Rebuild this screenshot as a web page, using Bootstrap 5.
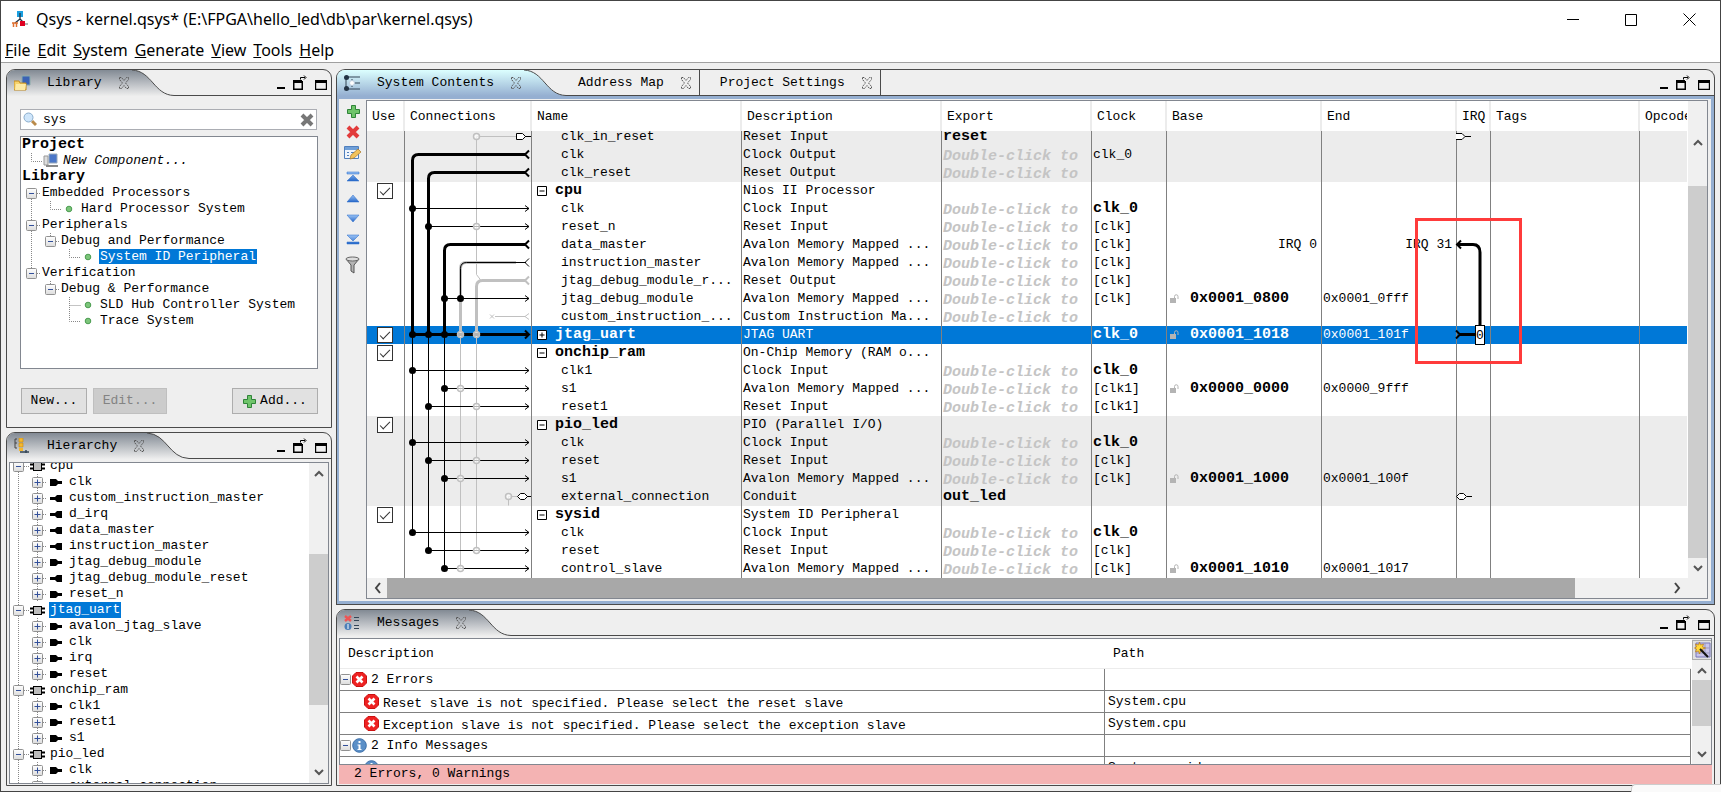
<!DOCTYPE html>
<html lang="en">
<head>
<meta charset="utf-8">
<meta name="viewport" content="width=device-width, initial-scale=1">
<title>Qsys - kernel.qsys*</title>
<link href="https://cdn.jsdelivr.net/npm/bootstrap@5.3.0/dist/css/bootstrap.min.css" rel="stylesheet">
<style>
  :root { --edge: #4a4a4a; --grid: #808080; --sel: #0078d7; }
  body { font: 13px/16px "Liberation Mono", monospace; color: #000; background: #efefef; }
  .win { height: 100vh; border: 1px solid #444; background: #efefef; overflow: hidden; }
  button { border: 0; background: none; padding: 0; color: inherit; }
  svg { display: block; flex: none; }
  .ui { font-family: "Noto Sans", sans-serif; font-size: 16px; line-height: 20px; }
  .titlebar { height: 36px; background: #fff; padding: 0 24px 0 11px; }
  .titlebar .mid { margin: 0 46px; }
  .menubar { height: 26px; background: #fff; border-bottom: 1px solid #a0a0a0; padding-left: 4px; gap: 7px; }
  .menubar a { color: #000; text-decoration: none; }
  .work { padding: 6px 5px 5px 5px; gap: 4px; }
  .side { width: 326px; gap: 4px; }
  .pane { border: 1px solid var(--edge); border-radius: 9px 9px 0 0; overflow: hidden; }
  .lib { height: 359px; }
  .pane-head { height: 26px; }
  .tab-on { background: linear-gradient(#828a94, #eeeeee); padding-left: 7px; }
  .tab-blue { background: linear-gradient(#dcffff, #95afd1); }
  .tab-name { padding-left: 16px; font-size: 13px; line-height: 26px; white-space: pre; }
  .tab-x { margin: 0 2px 0 16px; }
  .rest { border-bottom: 1px solid var(--edge); padding-right: 4px; }
  .plain-tab { border-right: 1px solid var(--edge); padding: 0 7px 0 20px; }
  .plain-tab.first { padding-left: 12px; }
  .lib-body { padding: 13px 13px 0 13px; }
  .search { height: 21px; border: 1px solid #abadb3; background: #fff; padding: 0 2px 0 2px; margin-right: 1px; }
  .search input { border: 0; outline: 0; background: none; padding: 0 0 0 6px; font: inherit; min-width: 0; }
  .tree { background: #fff; border: 1px solid #828790; overflow: hidden; white-space: pre; }
  .lib .tree { height: 233px; margin-top: 6px; }
  .trow { height: 16px; display: flex; align-items: center; }
  .trow b { font-size: 15px; }
  .picked { background: var(--sel); color: #fff; padding: 0 1px; }
  .modname { padding-left: 1px; }
  .pb { width: 66px; height: 26px; border: 1px solid #adadad; background: #e1e1e1; }
  .pb:disabled { border-color: #bfbfbf; background: #ccc; color: #838383; width: 74px; margin-left: 6px; }
  .pb-add { width: 86px; }
  .lib-btns { padding: 19px 0 0 1px; }
  .hier .tree { margin: 3px 2px 1px 2px; }
  .hier .rows { margin-top: -5px; height: 10px; }
  .vbar { width: 20px; background: #f0f0f0; border-left: 1px solid #fff; }
  .vbar button, .hbar button { display: flex; align-items: center; justify-content: center; flex: none; }
  .vbar button { height: 20px; }
  .hbar button { width: 20px; }
  .thumb { background: #cdcdcd; }
  .thumb-dark { background: #a8a8a8; }
  .main { border-bottom: 0; }
  .main-body { border: solid #95afd1; border-width: 3px 3px 3px 2px; padding: 1px 3px 2px 0; }
  .main-wrap { border-bottom: 1px solid var(--edge); }
  .tools { width: 27px; padding-top: 3px; }
  .tools button { display: block; margin-bottom: 5px; }
  .sheet { border: 1px solid #828790; background: #fff; }
  .sheet-clip { overflow: hidden; }
  table { border-collapse: separate; border-spacing: 0; table-layout: fixed; width: 100%; }
  th { font-weight: 400; overflow: hidden; white-space: nowrap; }
  .sys th { height: 30px; padding: 2px 0 0 5px; border-right: 2px solid #ececec; }
  .sys th:last-child { border-right: 0; }
  .sys td { padding: 0; height: 18px; line-height: 18px; white-space: pre; border-right: 1px solid var(--grid); }
  .sys td:first-child { padding-left: 10px; }
  .sys td:last-child { border-right: 0; }
  .cell { height: 18px; overflow: hidden; display: flex; align-items: center; padding-left: 1px; }
  .cut .cell { height: 15px; align-items: flex-end; }
  .cut td { height: 15px; }
  .sys b, .hint { font-size: 15px; font-weight: 700; }
  .hint { font-style: italic; color: #c4c4c4; padding-top: 3px; }
  .lk { margin: 0 11px 0 2px; }
  .alt { background: #ececec; }
  .on { background: var(--sel); color: #fff; }
  .holder { position: relative; }
  .wires { position: absolute; left: -1px; top: 0; z-index: 1; overflow: visible; }
  .callout-box { position: absolute; left: -42px; top: 87px; width: 107px; height: 146px; border: 3px solid #ff3b3b; z-index: 2; }
  .ck { appearance: none; width: 16px; height: 16px; margin: 0; border: 1px solid #333; background: #fff; display: grid; place-items: center; }
  .ck:checked::after { content: ""; width: 10px; height: 5px; border: solid #333; border-width: 0 0 1px 1px; transform: rotate(-45deg) translate(1px, -1px); }
  .hbar { height: 20px; background: #f0f0f0; padding-right: 20px; }
  .msg-body { padding: 2px 2px 1px 2px; }
  .msg-sheet { background: #fff; border: 1px solid #828790; min-height: 0; flex: 1 1 0; }
  .msg th { height: 30px; padding-left: 8px; border-bottom: 1px solid #ececec; }
  .msg td { height: 22px; padding: 0; border-bottom: 1px solid var(--grid); border-right: 1px solid var(--grid); white-space: pre; }
  .msg td > div { display: flex; align-items: center; }
  .msg td + td { padding-left: 3px; }
  .wand { width: 20px; height: 29px; border: 1px solid #adadad; background: #e1e1e1; margin-top: 1px; }
  .status { background: #f4b3b3; height: 19px; line-height: 18px; padding-left: 15px; white-space: pre; }
  .strip { position: absolute; right: 0; bottom: 0; width: 90px; height: 8px; background: #fafafa; border: 1px solid #ccc; border-width: 1px 0 0 1px; border-radius: 5px 0 0 0; z-index: 3; }
</style>
</head>
<body>
<svg width="0" height="0" class="position-absolute">
  <defs>
    <linearGradient id="gGray" x2="0" y2="1"><stop stop-color="#828a94"/><stop offset="1" stop-color="#eee"/></linearGradient>
    <linearGradient id="gBlue" x2="0" y2="1"><stop stop-color="#dcffff"/><stop offset="1" stop-color="#95afd1"/></linearGradient>
    <linearGradient id="gArrow" x2="0" y2="1"><stop stop-color="#9cc4f5"/><stop offset="1" stop-color="#2768c9"/></linearGradient>
    <linearGradient id="gBox" x2="0" y2="1"><stop stop-color="#fff"/><stop offset="1" stop-color="#dcdcdc"/></linearGradient>
    <symbol id="tabx" viewBox="0 0 12 12"><path d="M1.500 .5h2l2.500 3 2.500-3h2v2L7.500 6l3 3.500v2h-2L6 8.500l-2.500 3h-2v-2L4.500 6l-3-3.500z" fill="none" stroke="#555" stroke-dasharray="1.500 .8"/></symbol>
    <symbol id="curveG" viewBox="0 0 42 26"><path d="M0 0C20 1 22 25 42 25.500V26H0z" fill="url(#gGray)"/><path d="M0 0C20 1 22 25 42 25.500" fill="none" stroke="#4a4a4a"/></symbol>
    <symbol id="curveB" viewBox="0 0 42 26"><path d="M0 0C20 1 22 25 42 25.500V26H0z" fill="url(#gBlue)"/><path d="M0 0C20 1 22 25 42 25.500" fill="none" stroke="#4a4a4a"/></symbol>
    <symbol id="wmin" viewBox="0 0 8 16"><path d="M0 12h8v2H0z"/></symbol>
    <symbol id="wres" viewBox="0 0 14 16"><path d="M0 5h9v1h1v9H0zM1.500 8v5.500h7V8z" fill-rule="evenodd"/><path d="M7.500 4.500V2.500H12M11 .5l2 2-2 2" fill="none" stroke="#000"/></symbol>
    <symbol id="wmax" viewBox="0 0 12 16"><path d="M0 5h12v10H0zM1.200 8v5.800h9.600V8z" fill-rule="evenodd"/></symbol>
    <symbol id="plus" viewBox="0 0 13 13"><path d="M4.500 .5h4v4h4v4h-4v4h-4v-4h-4v-4h4z" fill="#6fc46a" stroke="#2f8438"/></symbol>
    <symbol id="minusbox" viewBox="0 0 12 12"><rect x=".5" y=".5" width="10" height="10" rx="1" fill="url(#gBox)" stroke="#919191"/><path d="M3 5.500h5" stroke="#33509a"/></symbol>
    <symbol id="plusbox" viewBox="0 0 12 12"><rect x=".5" y=".5" width="10" height="10" rx="1" fill="url(#gBox)" stroke="#919191"/><path d="M2.500 5.500h6M5.500 2.500v6" stroke="#33509a"/></symbol>
    <symbol id="ball" viewBox="0 0 8 8"><circle cx="4" cy="4" r="2.800" fill="#7cc57a" stroke="#4b9c50"/></symbol>
    <symbol id="chip" viewBox="0 0 15 12"><path d="M0 3.500h4M0 7.500h4M11 3.500h4M11 7.500h4" stroke="#000" stroke-width="2"/><rect x="3.500" y="1.500" width="8" height="8" fill="#bdbdbd" stroke="#000"/></symbol>
    <symbol id="slave" viewBox="0 0 12 8"><path d="M0 0h6l2 2h4v3H8L6 7H0z"/></symbol>
    <symbol id="master" viewBox="0 0 12 8"><path d="M12 0H7L5 2H0v3h5l2 2h5z"/></symbol>
    <symbol id="up" viewBox="0 0 10 7"><path d="M1 6l4-4 4 4" fill="none" stroke="#555" stroke-width="2"/></symbol>
    <symbol id="dn" viewBox="0 0 10 7"><path d="M1 1l4 4 4-4" fill="none" stroke="#555" stroke-width="2"/></symbol>
    <symbol id="lock" viewBox="0 0 9 10"><path d="M0 4h6v5H0z" fill="#b4b4b4"/><path d="M4.500 4V2.500a1.500 1.500 0 0 1 3.500 0V5" fill="none" stroke="#b4b4b4"/></symbol>
    <symbol id="err" viewBox="0 0 15 15"><path d="M4 .5h7L14.500 4v7L11 14.500H4L.5 11V4z" fill="#ee2222" stroke="#c11"/><path d="M4.500 4.500l6 6m0-6l-6 6" stroke="#fff" stroke-width="2.600"/></symbol>
    <symbol id="info" viewBox="0 0 15 15"><circle cx="7.500" cy="7.500" r="6.800" fill="#5b8fc7" stroke="#3b6ea8"/><path d="M6.500 3h2v2h-2zM5.500 6.500h3V11h1v1h-4v-1h1V7.500h-1z" fill="#fff"/></symbol>
  </defs>
</svg>

<div class="win d-flex flex-column">
  <header class="titlebar ui d-flex align-items-center">
    <svg width="16" height="16" viewBox="0 0 16 16"><path d="M5 0h6v6H5z" fill="#1a9fe0"/><path d="M8 2v7M8 8L3 12M8 8l4 4" stroke="#234" stroke-width="1.300" fill="none"/><path d="M0 12h6M1.500 12v4M4.500 12v4" stroke="#e07030" stroke-width="1.500"/><path d="M8 10h5v5H8z" fill="#e00020"/><path d="M13 13h3" stroke="#666"/></svg>
    <span class="ms-2 flex-grow-1">Qsys - kernel.qsys* (E:\FPGA\hello_led\db\par\kernel.qsys)</span>
    <button aria-label="Minimize"><svg width="12" height="13" viewBox="0 0 12 13"><path d="M0 6.500h12" stroke="#000"/></svg></button>
    <button class="mid" aria-label="Maximize"><svg width="12" height="13" viewBox="0 0 12 13"><path d="M.5 1.500h11v11H.5z" fill="none" stroke="#000"/></svg></button>
    <button aria-label="Close"><svg width="13" height="13" viewBox="0 0 13 13"><path d="M.5 .5l12 12m0-12l-12 12" stroke="#000"/></svg></button>
  </header>
  <nav class="menubar ui d-flex align-items-center" aria-label="Main menu">
    <a href="#"><u>F</u>ile</a><a href="#"><u>E</u>dit</a><a href="#"><u>S</u>ystem</a><a href="#"><u>G</u>enerate</a><a href="#"><u>V</u>iew</a><a href="#"><u>T</u>ools</a><a href="#"><u>H</u>elp</a>
  </nav>

  <main class="work d-flex flex-grow-1 overflow-hidden">
    <div class="side d-flex flex-column flex-shrink-0">
      <section class="pane lib flex-shrink-0">
        <div class="pane-head d-flex">
          <div class="tab-on d-flex align-items-center">
            <svg width="17" height="16" viewBox="0 0 17 16"><path d="M8 1h8v9H8z" fill="#3b63b5" stroke="#8aa"/><path d="M0 6h5l1 2h6v7H0z" fill="#f7d36b" stroke="#c08a20"/><path d="M2 9h10l-1 6H1z" fill="#fdeaa5"/></svg>
            <span class="tab-name">Library</span><svg class="tab-x" width="12" height="12"><use href="#tabx"/></svg>
          </div>
          <svg width="42" height="26"><use href="#curveG"/></svg>
          <div class="rest flex-grow-1 d-flex justify-content-end align-items-center gap-2"><button aria-label="Minimize"><svg width="8" height="16"><use href="#wmin"/></svg></button><button aria-label="Detach"><svg width="14" height="16"><use href="#wres"/></svg></button><button aria-label="Maximize"><svg width="12" height="16"><use href="#wmax"/></svg></button></div>
        </div>
        <div class="lib-body">
          <div class="search d-flex align-items-center">
            <svg width="14" height="15" viewBox="0 0 14 15"><path d="M9 9l4 4" stroke="#b98a4a" stroke-width="3"/><circle cx="5.500" cy="5.500" r="4.500" fill="#cfe6fb" stroke="#8aaccc"/></svg>
            <input class="flex-grow-1" type="text" value="sys" aria-label="Search library">
            <button aria-label="Clear"><svg width="14" height="14" viewBox="0 0 14 14"><path d="M2 2l10 10m0-10L2 12" stroke="#777" stroke-width="4"/></svg></button>
          </div>
          <div class="tree" id="libTree"></div>
          <div class="lib-btns d-flex"><button class="pb">New...</button><button class="pb" disabled>Edit...</button><button class="pb pb-add ms-auto d-flex align-items-center justify-content-center gap-1"><svg width="13" height="13"><use href="#plus"/></svg><span>Add...</span></button></div>
        </div>
      </section>

      <section class="pane hier flex-grow-1 d-flex flex-column">
        <div class="pane-head d-flex flex-shrink-0">
          <div class="tab-on d-flex align-items-center">
            <svg width="17" height="16" viewBox="0 0 17 16"><path d="M3 1H1v9h2M1 5h2" stroke="#444" fill="none"/><path d="M5 0h4v4H5zM5 5h4v4H5z" fill="#f5b82e" stroke="#c88a10" stroke-width=".6"/><path d="M5 10h4v3H5z" fill="#f5b82e"/><path d="M6 14h5M12 12v3M11 14h4" stroke="#345" fill="none" stroke-width="1.500"/></svg>
            <span class="tab-name">Hierarchy</span><svg class="tab-x" width="12" height="12"><use href="#tabx"/></svg>
          </div>
          <svg width="42" height="26"><use href="#curveG"/></svg>
          <div class="rest flex-grow-1 d-flex justify-content-end align-items-center gap-2"><button aria-label="Minimize"><svg width="8" height="16"><use href="#wmin"/></svg></button><button aria-label="Detach"><svg width="14" height="16"><use href="#wres"/></svg></button><button aria-label="Maximize"><svg width="12" height="16"><use href="#wmax"/></svg></button></div>
        </div>
        <div class="tree flex-grow-1 d-flex">
          <div class="rows flex-grow-1" id="hierTree"></div>
          <div class="vbar d-flex flex-column">
            <button aria-label="Scroll up"><svg width="10" height="7"><use href="#up"/></svg></button>
            <div style="flex:71"></div><div class="thumb" style="flex:150"></div><div style="flex:58"></div>
            <button aria-label="Scroll down"><svg width="10" height="7"><use href="#dn"/></svg></button>
          </div>
        </div>
      </section>
    </div>

    <div class="flex-grow-1 d-flex flex-column overflow-hidden gap-1">
      <section class="pane main flex-shrink-0">
        <div class="pane-head d-flex">
          <div class="tab-on tab-blue d-flex align-items-center">
            <svg width="17" height="16" viewBox="0 0 17 16"><path d="M2 2h14M2 14h14M2 2v12M8 8h8M8 4v8" stroke="#345" fill="none"/><circle cx="2.500" cy="2.500" r="2.500" fill="#234"/><circle cx="2.500" cy="13.500" r="2.500" fill="#234"/><circle cx="8" cy="8" r="2.500" fill="#fff" stroke="#bcd"/></svg>
            <span class="tab-name">System Contents</span><svg class="tab-x" width="12" height="12"><use href="#tabx"/></svg>
          </div>
          <svg width="42" height="26"><use href="#curveB"/></svg>
          <div class="rest flex-grow-1 d-flex align-items-center">
            <div class="plain-tab first d-flex align-items-center h-100"><span>Address Map</span><svg class="ms-3" width="12" height="12"><use href="#tabx"/></svg></div>
            <div class="plain-tab d-flex align-items-center h-100"><span>Project Settings</span><svg class="ms-3" width="12" height="12"><use href="#tabx"/></svg></div>
            <div class="ms-auto d-flex gap-2"><button aria-label="Minimize"><svg width="8" height="16"><use href="#wmin"/></svg></button><button aria-label="Detach"><svg width="14" height="16"><use href="#wres"/></svg></button><button aria-label="Maximize"><svg width="12" height="16"><use href="#wmax"/></svg></button></div>
          </div>
        </div>
        <div class="main-wrap"><div class="main-body d-flex">
          <div class="tools d-flex flex-column align-items-center flex-shrink-0">
            <button aria-label="Add"><svg width="16" height="16" viewBox="-2 -2 16 16"><path d="M4.500 .5h4v4h4v4h-4v4h-4v-4h-4v-4h4z" fill="#6fc46a" stroke="#2f8438"/></svg></button>
            <button aria-label="Remove"><svg width="16" height="16" viewBox="0 0 16 16"><path d="M3 3l10 10m0-10L3 13" stroke="#e23b3b" stroke-width="4"/></svg></button>
            <button class="mb-2" aria-label="Edit"><svg width="17" height="16" viewBox="0 0 17 16"><path d="M.5 1.500h14v12H.5z" fill="#eef4fc" stroke="#4f7fbd"/><path d="M1 2h13v3H1z" fill="#6f9fd8"/><path d="M3 7.500h2M3 10.500h2M7 7.500h5" stroke="#4f7fbd"/><path d="M6 14l1-4 7-6 3 3-7 6z" fill="#f3c35b" stroke="#a8752a" stroke-width=".7"/></svg></button>
            <button aria-label="Move to top"><svg width="14" height="16" viewBox="0 0 14 16"><path d="M1 3h12v2H1zM1 12l6-6 6 6z" fill="url(#gArrow)" stroke="#2768c9" stroke-width=".5"/></svg></button>
            <button aria-label="Move up"><svg width="14" height="16" viewBox="0 0 14 16"><path d="M1 12l6-7 6 7z" fill="url(#gArrow)" stroke="#2768c9" stroke-width=".5"/></svg></button>
            <button aria-label="Move down"><svg width="14" height="16" viewBox="0 0 14 16"><path d="M1 4l6 7 6-7z" fill="url(#gArrow)" stroke="#2768c9" stroke-width=".5"/></svg></button>
            <button class="mb-2" aria-label="Move to bottom"><svg width="14" height="16" viewBox="0 0 14 16"><path d="M1 3l6 6 6-6zM1 10h12v2H1z" fill="url(#gArrow)" stroke="#2768c9" stroke-width=".5"/></svg></button>
            <button aria-label="Filter"><svg width="15" height="18" viewBox="0 0 15 18"><path d="M1 3l5 6v6l3 2V9l5-6z" fill="#b5b5b5" stroke="#555"/><ellipse cx="7.500" cy="3" rx="6.500" ry="2" fill="#ddd" stroke="#666"/></svg></button>
          </div>
          <div class="sheet flex-grow-1 overflow-hidden">
            <div class="d-flex">
              <div class="sheet-clip flex-grow-1">
                <table class="sys">
                  <colgroup><col style="width:38px"><col style="width:127px"><col style="width:210px"><col style="width:200px"><col style="width:150px"><col style="width:75px"><col style="width:155px"><col style="width:135px"><col style="width:34px"><col><col style="width:47px"></colgroup>
                  <thead><tr><th>Use</th><th>Connections</th><th>Name</th><th>Description</th><th>Export</th><th>Clock</th><th>Base</th><th>End</th><th>IRQ</th><th>Tags</th><th>Opcode</th></tr></thead>
                  <tbody id="sysRows"></tbody>
                </table>
              </div>
              <div class="vbar d-flex flex-column flex-shrink-0">
                <div style="height:31px"></div>
                <button aria-label="Scroll up"><svg width="10" height="7"><use href="#up"/></svg></button>
                <div style="flex:34"></div><div class="thumb" style="flex:370"></div>
                <button aria-label="Scroll down"><svg width="10" height="7"><use href="#dn"/></svg></button>
              </div>
            </div>
            <div class="hbar d-flex">
              <button aria-label="Scroll left"><svg width="7" height="12" viewBox="0 0 7 12"><path d="M6 1L2 6l4 5" fill="none" stroke="#444" stroke-width="2"/></svg></button>
              <div class="thumb-dark" style="flex:1186"></div><div style="flex:92"></div>
              <button aria-label="Scroll right"><svg width="7" height="12" viewBox="0 0 7 12"><path d="M1 1l4 5-4 5" fill="none" stroke="#444" stroke-width="2"/></svg></button>
            </div>
          </div>
        </div></div>
      </section>

      <section class="pane flex-grow-1 d-flex flex-column">
        <div class="pane-head d-flex flex-shrink-0">
          <div class="tab-on d-flex align-items-center">
            <svg width="17" height="16" viewBox="0 0 17 16"><path d="M1 1l6 5m0-5L1 6" stroke="#e55" stroke-width="2.500"/><circle cx="4" cy="11.500" r="3.500" fill="#4d7fb8"/><path d="M4 9v5" stroke="#fff"/><path d="M10 2.500h5M10 5.500h5M10 10.500h5M10 13.500h5" stroke="#345"/></svg>
            <span class="tab-name">Messages</span><svg class="tab-x" width="12" height="12"><use href="#tabx"/></svg>
          </div>
          <svg width="42" height="26"><use href="#curveG"/></svg>
          <div class="rest flex-grow-1 d-flex justify-content-end align-items-center gap-2"><button aria-label="Minimize"><svg width="8" height="16"><use href="#wmin"/></svg></button><button aria-label="Detach"><svg width="14" height="16"><use href="#wres"/></svg></button><button aria-label="Maximize"><svg width="12" height="16"><use href="#wmax"/></svg></button></div>
        </div>
        <div class="msg-body flex-grow-1 d-flex flex-column overflow-hidden">
          <div class="msg-sheet d-flex overflow-hidden">
            <div class="flex-grow-1 overflow-hidden">
              <table class="msg">
                <colgroup><col style="width:765px"><col></colgroup>
                <thead><tr><th>Description</th><th>Path</th></tr></thead>
                <tbody>
                  <tr><td><div><svg width="12" height="12"><use href="#minusbox"/></svg><svg class="me-1" width="15" height="15"><use href="#err"/></svg><span>2 Errors</span></div></td><td></td></tr>
                  <tr><td><div class="ps-4"><svg class="me-1" width="15" height="15"><use href="#err"/></svg><span class="pt-1">Reset slave is not specified. Please select the reset slave</span></div></td><td>System.cpu</td></tr>
                  <tr><td><div class="ps-4"><svg class="me-1" width="15" height="15"><use href="#err"/></svg><span class="pt-1">Exception slave is not specified. Please select the exception slave</span></div></td><td>System.cpu</td></tr>
                  <tr><td><div><svg width="12" height="12"><use href="#minusbox"/></svg><svg class="me-1" width="15" height="15"><use href="#info"/></svg><span>2 Info Messages</span></div></td><td></td></tr>
                  <tr><td><div class="ps-4"><svg class="me-1" width="15" height="15"><use href="#info"/></svg></div></td><td>System.sysid</td></tr>
                </tbody>
              </table>
            </div>
            <div class="vbar d-flex flex-column flex-shrink-0">
              <button class="wand" aria-label="Message settings"><svg width="17" height="17" viewBox="0 0 17 17"><path d="M2 1h14v14H2z" fill="#c9c4ea" stroke="#77b"/><path d="M2 6h14M2 11h14M11 1v14" stroke="#99b"/><path d="M5.500 0l1 3 3-1-1 3 3 1-3 1 1 3-3-1-1 3-1-3-3 1 1-3-2-1 2-1-1-3 3 1z" fill="#ffd83a" stroke="#b8791a" stroke-width=".7"/><path d="M6 7l8 8" stroke="#111" stroke-width="2"/></svg></button>
              <button aria-label="Scroll up"><svg width="10" height="7"><use href="#up"/></svg></button>
              <div class="thumb" style="flex:37"></div><div style="flex:14"></div>
              <button aria-label="Scroll down"><svg width="10" height="7"><use href="#dn"/></svg></button>
            </div>
          </div>
          <div class="status flex-shrink-0">2 Errors, 0 Warnings</div>
        </div>
      </section>
    </div>
  </main>
</div>
<div class="strip"></div>

<script src="https://cdn.jsdelivr.net/npm/bootstrap@5.3.0/dist/js/bootstrap.bundle.min.js"></script>
<script>
const dots = 'stroke="#888" stroke-dasharray="1 1" fill="none"';
function icon(id, x, y) {
  const s = id === 'ball' ? 8 : 12;
  return `<use href="#${id}" x="${x}" y="${y}" width="${s}" height="${s}"/>`;
}

// Library tree: gutter drawing followed by the label
const lib = [
  ['', '<b>Project</b>', 1],
  [`<svg width="42" height="16"><path d="M10.500 0v8.500H22" ${dots}/><path d="M23 3h4v9h-4z" fill="#ddd" stroke="#999"/><path d="M28 1h8v9h-8z" fill="#4b77c9" stroke="#9ab"/><path d="M25 13h12" stroke="#888" stroke-width="2"/></svg>`, '<i>New Component...</i>', 0],
  ['', '<b>Library</b>', 1],
  [`<svg width="21" height="16"><path d="M10.500 8v8M16 8.500h4" ${dots}/>${icon('minusbox', 5, 3)}</svg>`, 'Embedded Processors'],
  [`<svg width="60" height="16"><path d="M10.500 0v16M29.500 0v8.500H40" ${dots}/>${icon('ball', 44, 4)}</svg>`, 'Hard Processor System'],
  [`<svg width="21" height="16"><path d="M10.500 0v16M16 8.500h4" ${dots}/>${icon('minusbox', 5, 3)}</svg>`, 'Peripherals'],
  [`<svg width="40" height="16"><path d="M10.500 0v16M29.500 0v3M35 8.500h4" ${dots}/>${icon('minusbox', 24, 3)}</svg>`, 'Debug and Performance'],
  [`<svg width="78" height="16"><path d="M10.500 0v16M48.500 0v8.500H60" ${dots}/>${icon('ball', 63, 4)}</svg>`, '<span class="picked">System ID Peripheral</span>'],
  [`<svg width="21" height="16"><path d="M10.500 0v3M16 8.500h4" ${dots}/>${icon('minusbox', 5, 3)}</svg>`, 'Verification'],
  [`<svg width="40" height="16"><path d="M29.500 0v3M35 8.500h4" ${dots}/>${icon('minusbox', 24, 3)}</svg>`, 'Debug &amp; Performance'],
  [`<svg width="79" height="16"><path d="M48.500 0v16M48.500 8.500H60" ${dots}/>${icon('ball', 63, 4)}</svg>`, 'SLD Hub Controller System'],
  [`<svg width="79" height="16"><path d="M48.500 0v8.500H60" ${dots}/>${icon('ball', 63, 4)}</svg>`, 'Trace System'],
];
document.getElementById('libTree').innerHTML =
  lib.map(r => `<div class="trow${r[2] ? ' modname' : ''}">${r[0]}<span>${r[1]}</span></div>`).join('');

// Hierarchy tree: '>' slave, '<' master, plain name is a module
const hier = ['cpu', '>clk', '<custom_instruction_master', '<d_irq', '<data_master', '<instruction_master', '>jtag_debug_module',
  '<jtag_debug_module_reset', '>reset_n', 'jtag_uart', '>avalon_jtag_slave', '>clk', '>irq', '>reset', 'onchip_ram', '>clk1',
  '>reset1', '>s1', 'pio_led', '>clk', '>external_connection'];
document.getElementById('hierTree').innerHTML = hier.map(n => {
  const kind = n[0] === '>' ? 'slave' : n[0] === '<' ? 'master' : '';
  if (!kind) {
    const label = n === 'jtag_uart' ? `<span class="picked">${n}</span>` : `<span class="modname">${n}</span>`;
    return `<div class="trow"><svg width="39" height="16"><path d="M8.500 0v16M14 8.500h6" ${dots}/>${icon('minusbox', 3, 3)}<use href="#chip" x="20" y="3" width="15" height="12"/></svg>${label}</div>`;
  }
  return `<div class="trow"><svg width="59" height="16"><path d="M8.500 0v16M27.500 0v16M33 8.500h4" ${dots}/>${icon('plusbox', 22, 3)}<use href="#${kind}" x="40" y="5" width="12" height="8"/></svg><span>${n.slice(1)}</span></div>`;
}).join('');

// System contents: [name, description, export, clock, base, end]
const A = 'Avalon Memory Mapped ...', H = '~';
const rows = [
  ['clk_in_reset', 'Reset Input', '*reset', '', '', ''],
  ['clk', 'Clock Output', H, 'clk_0'],
  ['clk_reset', 'Reset Output', H, ''],
  ['#cpu', 'Nios II Processor', '', ''],
  ['clk', 'Clock Input', H, '*clk_0'],
  ['reset_n', 'Reset Input', H, '[clk]'],
  ['data_master', A, H, '[clk]', 'IRQ 0', 'IRQ 31'],
  ['instruction_master', A, H, '[clk]'],
  ['jtag_debug_module_r...', 'Reset Output', H, '[clk]'],
  ['jtag_debug_module', A, H, '[clk]', '0x0001_0800', '0x0001_0fff'],
  ['custom_instruction_...', 'Custom Instruction Ma...', H, ''],
  ['#jtag_uart', 'JTAG UART', '', '*clk_0', '0x0001_1018', '0x0001_101f'],
  ['#onchip_ram', 'On-Chip Memory (RAM o...', '', ''],
  ['clk1', 'Clock Input', H, '*clk_0'],
  ['s1', A, H, '[clk1]', '0x0000_0000', '0x0000_9fff'],
  ['reset1', 'Reset Input', H, '[clk1]'],
  ['#pio_led', 'PIO (Parallel I/O)', '', ''],
  ['clk', 'Clock Input', H, '*clk_0'],
  ['reset', 'Reset Input', H, '[clk]'],
  ['s1', A, H, '[clk]', '0x0001_1000', '0x0001_100f'],
  ['external_connection', 'Conduit', '*out_led', ''],
  ['#sysid', 'System ID Peripheral', '', ''],
  ['clk', 'Clock Input', H, '*clk_0'],
  ['reset', 'Reset Input', H, '[clk]'],
  ['control_slave', A, H, '[clk]', '0x0001_1010', '0x0001_1017'],
];

// Vertical centre of row n inside the wiring drawings
const Y = n => 5.5 + 18 * n;
const bus = { a: 8.5, b: 24.5, c: 40.5, d: 56.5, e: 72.5 };
function wires() {
  let s = '';
  const p = (d, c, w) => { s += `<path d="${d}" fill="none" stroke="${c}" stroke-width="${w}"/>`; };
  const K = '#000', G = '#c0c0c0';
  const dot = (x, n) => { s += `<circle cx="${x}" cy="${Y(n)}" r="3.5"/>`; };
  const ring = (x, n) => { s += `<circle cx="${x}" cy="${Y(n)}" r="3" fill="#fff" fill-opacity=".7" stroke="${G}" stroke-width="1.5"/>`; };
  const corner = (x, n, to, c, w) => {
    p(`M122 ${Y(n)}H${x + 6}Q${x} ${Y(n)} ${x} ${Y(n) + 6}V${Y(to)}`, c, w);
    p(`M125 ${Y(n) - 4}L121 ${Y(n)}L125 ${Y(n) + 4}`, c, w > 1 ? 2 : 1);
  };
  p(`M${bus.e} ${Y(0)}V${Y(8) - 6}L77 ${Y(8)}M${bus.e} ${Y(0)}H112`, G, 1);
  corner(bus.e, 8, 11, G, 3);
  p(`M${bus.e} ${Y(11)}V${Y(23)}M${bus.d} ${Y(11)}V${Y(24)}`, G, 1);
  p(`M112 ${Y(7)}H62Q${bus.d} ${Y(7)} ${bus.d} ${Y(7) + 6}V${Y(11)}`, G, 3);
  corner(bus.d, 7, 9, K, 1);
  corner(bus.a, 1, 11, K, 3); corner(bus.b, 2, 11, K, 3); corner(bus.c, 6, 11, K, 3);
  p(`M${bus.a} ${Y(11)}V${Y(22)}M${bus.b} ${Y(11)}V${Y(23)}M${bus.c} ${Y(11)}V${Y(24)}`, K, 1);
  p(`M${bus.a} ${Y(11)}H124`, K, 3);
  p(`M121 ${Y(11) - 4}L125 ${Y(11)}L121 ${Y(11) + 4}`, K, 2);
  [['a', 4], ['b', 5], ['c', 9], ['a', 13], ['c', 14], ['b', 15], ['a', 17], ['b', 18], ['c', 19], ['a', 22], ['b', 23], ['c', 24]].forEach(([k, n]) => {
    p(`M${bus[k]} ${Y(n)}H125M121 ${Y(n) - 3}L125 ${Y(n)}L121 ${Y(n) + 3}`, K, 1); dot(bus[k], n);
  });
  dot(bus.d, 9); dot(bus.a, 11); dot(bus.b, 11); dot(bus.c, 11);
  [['e', 0], ['e', 5], ['d', 11], ['e', 11], ['d', 14], ['e', 15], ['e', 18], ['d', 19], ['e', 23], ['d', 24]].forEach(([k, n]) => ring(bus[k], n));
  p(`M86 ${Y(10) - 2}l4 4m0-4l-4 4M91 ${Y(10)}H121M125 ${Y(10) - 3}l-4 3 4 3`, G, 1);
  s += `<path d="M112.5 ${Y(0) - 3}h6l3 3-3 3h-6zM121 ${Y(0)}h6" fill="#fff" stroke="#000"/>`;
  p(`M104.500 ${Y(20)}v9M104 ${Y(20)}h9`, G, 1); ring(104.5, 20);
  s += `<path d="M113.5 ${Y(20)}l3-3h4l3 3-3 3h-4zM123 ${Y(20)}h4" fill="#fff" stroke="#000"/>`;
  return `<svg class="wires" width="127" height="447">${s}</svg>`;
}
const irq = `<svg class="wires" width="34" height="447">
  <path d="M0 ${Y(0) - 3}h6l3 3-3 3h-6M9 ${Y(0)}h6" fill="#fff" stroke="#000"/>
  <path d="M.5 ${Y(20)}l3-3h4l3 3-3 3h-4zM11 ${Y(20)}h5" fill="#fff" stroke="#000"/>
  <path d="M2 ${Y(6)}H17Q24 ${Y(6)} 24 ${Y(6) + 8}V194M3 ${Y(11)}H20" fill="none" stroke="#000" stroke-width="3"/>
  <path d="M5 ${Y(6) - 4}L1 ${Y(6)}L5 ${Y(6) + 4}M0 ${Y(11) - 4}L4 ${Y(11)}L0 ${Y(11) + 4}" fill="none" stroke="#000" stroke-width="2"/>
  <rect x="19.500" y="194.500" width="9" height="19" fill="#fff" stroke="#000"/><text x="20" y="208" font-size="13">0</text></svg><div class="callout-box"></div>`;

const txt = (v = '') => v[0] === '*' ? `<b>${v.slice(1)}</b>` : v === H ? '<span class="hint">Double-click to</span>' : v;
document.getElementById('sysRows').innerHTML = rows.map((r, i) => {
  const top = r[0][0] === '#';
  const name = top ? r[0].slice(1) : r[0];
  const cls = i === 0 ? 'alt cut' : i < 3 || (i > 15 && i < 21) ? 'alt' : i === 11 ? 'on' : '';
  const box = `<svg class="ms-1 me-2" width="10" height="10"><path d="M.5 .5h9v9h-9z" fill="#fff" stroke="#000"/><path d="M2.500 5h5${i === 11 ? 'M5 2.500v5' : ''}" stroke="#000"/></svg>`;
  const c = h => `<td><div class="cell">${h}</div></td>`;
  const base = (r[4] || '').startsWith('IRQ') ? `<span class="ms-auto pe-1">${r[4]}</span>` : r[4] ? `<svg class="lk" width="9" height="10"><use href="#lock"/></svg><b>${r[4]}</b>` : '';
  const end = (r[5] || '').startsWith('IRQ') ? `<span class="ms-auto pe-1">${r[5]}</span>` : r[5] || '';
  return `<tr class="${cls}"><td>${top ? `<input class="ck" type="checkbox" checked aria-label="Use ${name}">` : ''}</td>` +
    `<td class="holder">${i ? '' : wires()}</td>` +
    c(top ? box + `<b>${name}</b>` : `<span class="ps-4 ms-1">${name}</span>`) +
    c(txt(r[1])) + c(txt(r[2])) + c(txt(r[3])) + c(base) + c(end) +
    `<td class="holder">${i ? '' : irq}</td><td></td><td></td></tr>`;
}).join('');
</script>
</body>
</html>
